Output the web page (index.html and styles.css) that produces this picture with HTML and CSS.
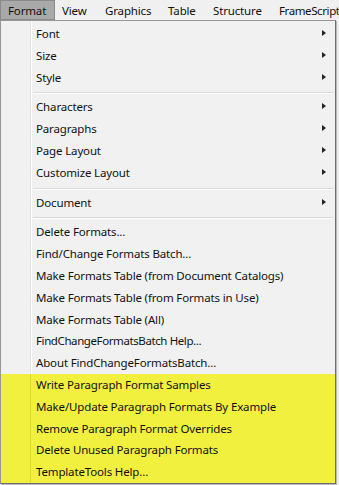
FILE: index.html
```html
<!DOCTYPE html>
<html lang="en">
<head>
    <meta charset="UTF-8">
    <title>Format menu</title>
    <link rel="stylesheet" href="styles.css">
</head>
<body>
    <div class="menubar">
        <span class="top active w-format">Format</span>
        <span class="top w-view">View</span>
        <span class="top w-graphics">Graphics</span>
        <span class="top w-table">Table</span>
        <span class="top w-structure">Structure</span>
        <span class="top w-fs">FrameScript</span>
    </div>

    <div class="menu">
        <div class="item sub">Font</div>
        <div class="item sub">Size</div>
        <div class="item sub">Style</div>
        <div class="sep"></div>
        <div class="item sub">Characters</div>
        <div class="item sub">Paragraphs</div>
        <div class="item sub">Page Layout</div>
        <div class="item sub">Customize Layout</div>
        <div class="sep"></div>
        <div class="item sub">Document</div>
        <div class="sep"></div>
        <div class="item">Delete Formats...</div>
        <div class="item">Find/Change Formats Batch...</div>
        <div class="item">Make Formats Table (from Document Catalogs)</div>
        <div class="item">Make Formats Table (from Formats in Use)</div>
        <div class="item">Make Formats Table (All)</div>
        <div class="item odd">FindChangeFormatsBatch Help...</div>
        <div class="item">About FindChangeFormatsBatch...</div>
        <div class="marked">
            <div class="item">Write Paragraph Format Samples</div>
            <div class="item">Make/Update Paragraph Formats By Example</div>
            <div class="item">Remove Paragraph Format Overrides</div>
            <div class="item">Delete Unused Paragraph Formats</div>
            <div class="item">TemplateTools Help...</div>
        </div>
    </div>
</body>
</html>
```

FILE: styles.css
```css
body {
    margin: 0;
    background: #f0f0f0;
    font-family: "Noto Sans", "Open Sans", sans-serif;
    font-size: 11.5px;
    letter-spacing: -0.15px;
    color: #111;
    width: 339px;
    height: 485px;
    overflow: hidden;
}
.menubar {
    height: 20px;
    display: flex;
    background: #f0f0f0;
    white-space: nowrap;
}
.top {
    flex: none;
    line-height: 21px;
    padding-left: 7px;
    box-sizing: border-box;
}
.top.active {
    background: #a9a9a9;
    box-shadow: inset 0 0 0 1px #8a8a8a;
    padding-left: 8px;
}
.w-format { width: 55px; }
.w-view { width: 43px; }
.w-graphics { width: 63px; }
.w-table { width: 45px; }
.w-structure { width: 67px; }
.w-fs { padding-left: 6px; letter-spacing: -0.4px; }
.menu {
    width: 333px;
    border: 1px solid #979797;
    border-bottom-color: #6f6f6f;
    border-right-color: #6f6f6f;
    padding: 2px 0 1px 1px;
    background: #f1f1f1 linear-gradient(to right, transparent 29px, #e2e3e3 29px, #e2e3e3 30px, #fff 30px, #fff 31px, transparent 31px);
    box-shadow: 1px 1px 0 #b9b9b9;
}
.item {
    height: 21.8px;
    line-height: 21.8px;
    padding-left: 34px;
    position: relative;
    white-space: nowrap;
}
.item.sub::after {
    content: "";
    position: absolute;
    right: 9px;
    top: 7px;
    border-left: 4px solid #222;
    border-top: 3.5px solid transparent;
    border-bottom: 3.5px solid transparent;
}
.item.odd {
    letter-spacing: -0.4px;
}
.sep {
    height: 8px;
    margin-left: 31px;
    margin-right: 2px;
    background: linear-gradient(#f1f1f1 4px, #d7d7d7 4px, #d7d7d7 5px, #fff 5px, #fff 6px, #f1f1f1 6px);
}
.marked {
    margin-left: -1px;
    margin-bottom: -1px;
    padding-left: 1px;
    background: #f2f03e linear-gradient(to right, transparent 29px, #dcd935 29px, #dcd935 30px, transparent 30px);
}
```
